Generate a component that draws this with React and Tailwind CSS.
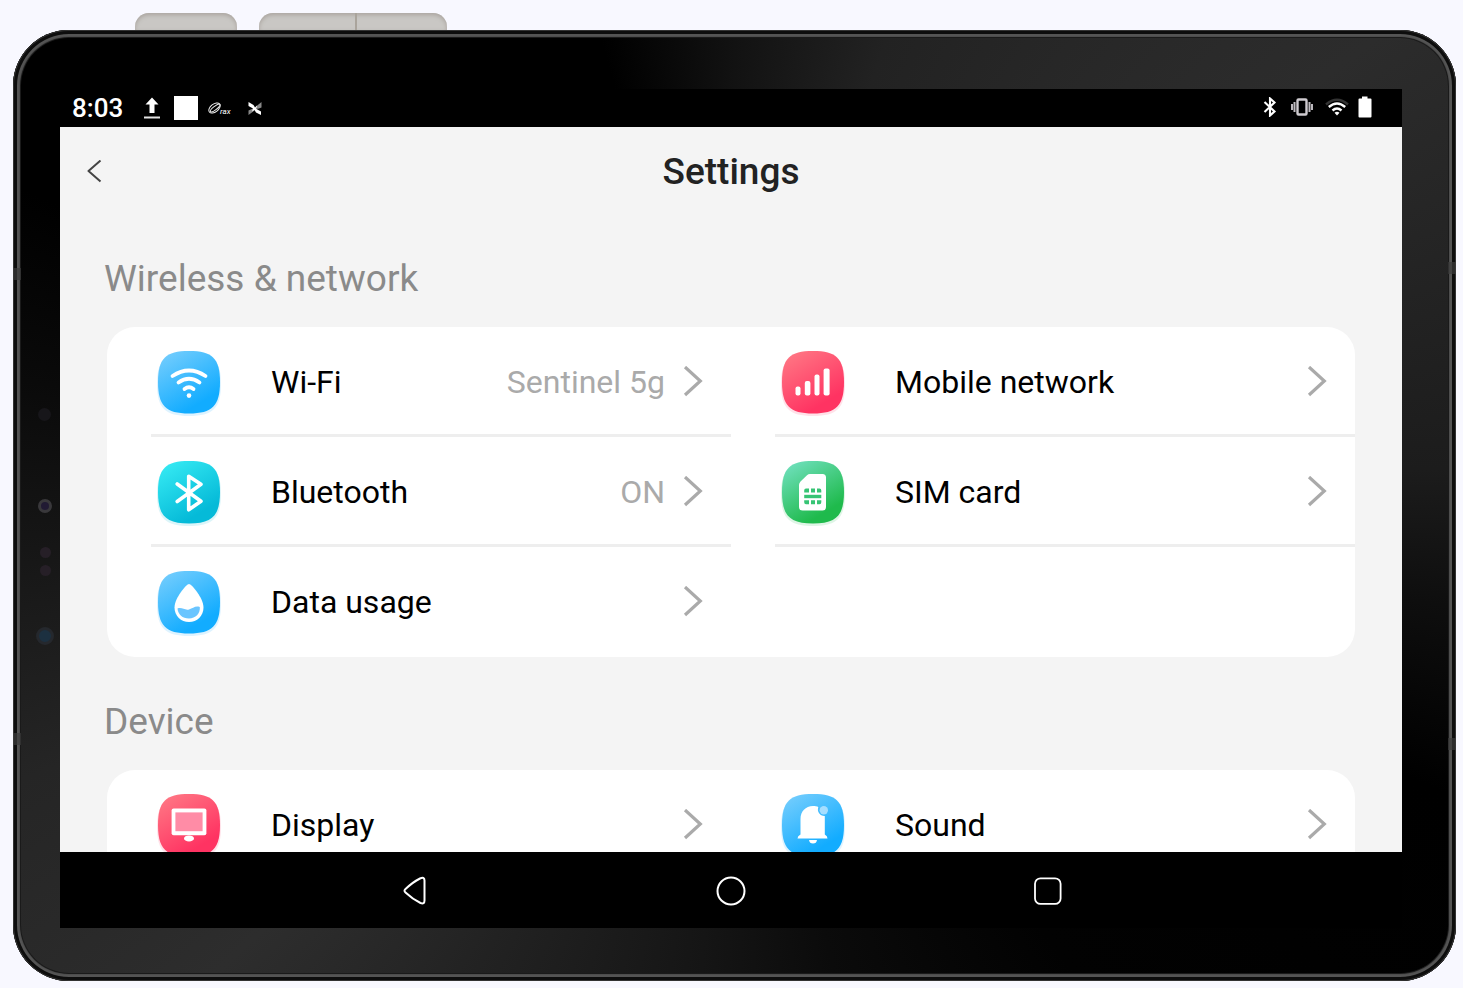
import React from "react";

const tones = {
  blue: ["#74cdfd", "#12acff"],
  cyan: ["#36eaf3", "#05bad8"],
  green: ["#70e0bd", "#1fba4c"],
  red: ["#ff7784", "#ff3362"],
};

function Tile({ id, tone, children }) {
  const [from, to] = tones[tone];
  return (
    <svg viewBox="0 0 64 64" className="size-16 shrink-0 overflow-visible" aria-hidden="true">
      <defs>
        <linearGradient id={id} x1="0.15" y1="0" x2="0.65" y2="0.85">
          <stop offset="0" stopColor={from} />
          <stop offset="1" stopColor={to} />
        </linearGradient>
      </defs>
      <path
        d="M32 3C56 3 64 10 64 34S56 66 32 66 0 58 0 34 8 3 32 3Z"
        fill={to}
        opacity="0.14"
      />
      <path d="M32 1C55.500 1 63 8.500 63 32S55.500 63.500 32 63.500 1 55.500 1 32 8.500 1 32 1Z" fill={`url(#${id})`} />
      {children}
    </svg>
  );
}

const WifiTile = () => (
  <Tile id="t-wifi" tone="blue">
    <g fill="none" stroke="#fff" strokeLinecap="round" strokeWidth="3.8">
      <path d="M15.500 26Q32 15 48.500 26" />
      <path d="M21.500 32.500Q32 25 42.500 32.500" />
      <path d="M27.500 39Q32 35.500 36.500 39" />
    </g>
    <circle cx="32" cy="45.600" r="2.300" fill="#fff" />
  </Tile>
);

const BluetoothTile = () => (
  <Tile id="t-bt" tone="cyan">
    <path
      d="M20.200 24L44 41.300L31.700 49.800V16.200L44 24.300L20.200 41.500"
      fill="none"
      stroke="#fff"
      strokeWidth="3.600"
      strokeLinecap="round"
      strokeLinejoin="round"
    />
  </Tile>
);

const DropTile = () => (
  <Tile id="t-drop" tone="blue">
    <path
      d="M32 14C34.500 14 46.500 28 46.500 37.500C46.500 46 40 52 32 52S17.500 46 17.500 37.500C17.500 28 29.500 14 32 14Z"
      fill="#fff"
    />
    <path
      d="M20.500 38.500C25 37 27.500 40.500 32 39.500C36 38.500 38 35.500 42.800 37C43.500 43.500 38.500 48.500 32 48.500S21 44.500 20.500 38.500Z"
      fill="#6ac5ff"
    />
  </Tile>
);

const SignalTile = () => (
  <Tile id="t-signal" tone="red">
    <g fill="#fff">
      <rect x="14.500" y="36.500" width="5" height="9" rx="2" />
      <rect x="23.800" y="31" width="5.600" height="14.500" rx="2" />
      <rect x="33.500" y="24.500" width="5" height="21" rx="2" />
      <rect x="42.600" y="18.500" width="6" height="27" rx="2" />
    </g>
  </Tile>
);

const SimTile = () => (
  <Tile id="t-sim" tone="green">
    <path
      d="M29 14H41.500Q45 14 45 17.500V47Q45 50.500 41.500 50.500H21.500Q18 50.500 18 47V25Q18 23 19.500 21.500L26 15.200Q27.200 14 29 14Z"
      fill="#fff"
    />
    <g fill="#36c474">
      <path d="M25 28.500H28V32.500H23.200V30.500Q23.200 28.500 25 28.500ZM30 28.500H34V32.500H30ZM36 28.500H38.500Q40.300 28.500 40.300 30.500V32.500H36Z" />
      <path d="M23.200 34.800H40.300V38.200H23.200Z" />
      <path d="M23.200 40.200H28V44.300H25Q23.200 44.300 23.200 42.300ZM30 40.200H34V44.300H30ZM36 40.200H40.300V42.300Q40.300 44.300 38.500 44.300H36Z" />
    </g>
  </Tile>
);

const DisplayTile = () => (
  <Tile id="t-display" tone="red">
    <rect x="14.600" y="15.400" width="34.800" height="26.800" rx="2" fill="#fff" />
    <rect x="18.400" y="19.400" width="27.200" height="18.800" fill="#ff8ca6" />
    <ellipse cx="32" cy="45.400" rx="5" ry="3" fill="#fff" />
  </Tile>
);

const SoundTile = () => (
  <Tile id="t-sound" tone="blue">
    <path
      d="M16.500 45.500Q16.500 43 19.500 41.500V26C19.500 18.500 24.500 13 32 13C34 13 36 13.400 37.300 14C35.800 18.500 38.500 22.800 43.800 23V41.500Q46.500 43 46.500 45.500Z"
      fill="#fff"
    />
    <path d="M28 47H36Q35.500 50.500 32 50.500T28 47Z" fill="#fff" />
    <circle cx="42.800" cy="17.300" r="4.200" fill="#a5deff" />
  </Tile>
);

function Chevron() {
  return (
    <svg viewBox="0 0 20 32" className="h-8 w-5 shrink-0" fill="none" aria-hidden="true">
      <path d="M2 1L17.300 15L2 29" stroke="#aaa" strokeWidth="3.200" />
    </svg>
  );
}

function Row({ item }) {
  return (
    <li className={item.divider ? "shadow-[inset_0_-3px_0_#eeeeee]" : ""}>
      <a href="#" className="flex h-[110px] items-center pr-7 pl-[6px]">
        <item.icon />
        <span className="ml-[50px] text-black">{item.label}</span>
        <span className="mr-[18px] ml-auto text-[#aaaaaa]">{item.value}</span>
        <Chevron />
      </a>
    </li>
  );
}

const sections = [
  {
    title: "Wireless & network",
    items: [
      { label: "Wi-Fi", value: "Sentinel 5g", icon: WifiTile, divider: true },
      { label: "Mobile network", icon: SignalTile, divider: true },
      { label: "Bluetooth", value: "ON", icon: BluetoothTile, divider: true },
      { label: "SIM card", icon: SimTile, divider: true },
      { label: "Data usage", icon: DropTile },
    ],
  },
  {
    title: "Device",
    items: [
      { label: "Display", icon: DisplayTile, divider: true },
      { label: "Sound", icon: SoundTile, divider: true },
    ],
  },
];

function Section({ section }) {
  return (
    <section>
      <h2 className="flex h-[113px] items-center px-11 pt-4 text-[37px] leading-10 text-[#8a8a8a]">
        {section.title}
      </h2>
      <ul className="mx-[47px] grid grid-cols-2 gap-x-11 rounded-[28px] bg-white pl-11 text-[32px] leading-10">
        {section.items.map((item) => (
          <Row key={item.label} item={item} />
        ))}
      </ul>
    </section>
  );
}

function StatusBar() {
  return (
    <div className="flex h-[38px] shrink-0 items-center bg-black pr-[30px] pl-3 text-white">
      <span className="w-[71px] text-[26px] leading-8 font-medium">8:03</span>
      <svg viewBox="0 0 18 24" className="h-6 w-[18px]" aria-hidden="true">
        <path d="M9 1.500L15.500 8.500H11.500V17H6.500V8.500H2.500Z" fill="#fff" />
        <path d="M1 20.500H17V22.500H1Z" fill="#e4e4e4" />
      </svg>
      <span className="ml-[13px] size-6 bg-white" />
      <svg viewBox="0 0 26 14" className="ml-[10px] h-[14px] w-[26px]" aria-hidden="true">
        <g fill="none" stroke="#eee" strokeWidth="1">
          <ellipse cx="6.500" cy="7" rx="6.500" ry="3.900" transform="rotate(-38 6.500 7)" />
          <ellipse cx="7.200" cy="7" rx="6" ry="1.800" transform="rotate(-38 7.200 7)" />
        </g>
        <text x="12" y="12.500" fontSize="8" fontStyle="italic" fill="#fff">
          rax
        </text>
      </svg>
      <svg viewBox="0 0 14 14" className="ml-[14px] h-[14px] w-[14px]" aria-hidden="true">
        <path d="M13.500 1V6.500L9.500 8L8 5.500ZM0.500 14V9.500L5 7.500L6.500 9.500Z" fill="#888" />
        <path d="M0.500 1L5.500 4L7 6.500L9 4.500L8.500 8L13 10.500V14L8 11.500L6.500 9L4 10.500L5 7.500L0.500 5Z" fill="#fff" />
      </svg>
      <div className="ml-auto flex items-center pb-[2px]">
        <svg viewBox="0 0 14 20" className="h-5 w-[14px]" fill="none" aria-hidden="true">
          <path d="M1.500 5L11.500 14.500L7 18.500V1.500L11.500 5.500L1.500 15" stroke="#fff" strokeWidth="2.100" />
        </svg>
        <svg viewBox="0 0 22 18" className="ml-[14px] h-[18px] w-[22px]" aria-hidden="true">
          <rect x="6.500" y="1.500" width="9" height="15" rx="1" fill="none" stroke="#cfcbd0" strokeWidth="2.400" />
          <path d="M1 6V12M3.500 4V14M18.500 4V14M21 6V12" stroke="#bdb9be" strokeWidth="2" />
        </svg>
        <svg viewBox="0 0 24 18" className="ml-3 h-[18px] w-6" fill="none" aria-hidden="true">
          <path d="M1 6.500Q12 -3 23 6.500" stroke="#333" strokeWidth="2.400" />
          <path d="M3.800 9Q12 2 20.200 9M7.500 12.500Q12 8.500 16.500 12.500" stroke="#fff" strokeWidth="2.400" />
          <path d="M12 17.500L9.500 14.700Q12 13 14.500 14.700Z" fill="#fff" />
        </svg>
        <svg viewBox="0 0 14 22" className="ml-[9px] h-[22px] w-[14px]" aria-hidden="true">
          <path d="M4 0.500H9.500V2.500H12.500Q13.500 2.500 13.500 3.500V20.500Q13.500 21.500 12.500 21.500H1.500Q0.500 21.500 0.500 20.500V3.500Q0.500 2.500 1.500 2.500H4Z" fill="#fff" />
        </svg>
      </div>
    </div>
  );
}

function NavBar() {
  return (
    <nav className="grid h-[76px] shrink-0 grid-cols-3 place-items-center bg-black px-[197px]">
      <button aria-label="Back" className="size-12">
        <svg viewBox="0 0 48 48" fill="none" stroke="#fff" strokeWidth="2" strokeLinejoin="round">
          <path d="M14.500 26.500Q12.500 24.800 14.500 23Q22 16 29 12.500Q33.500 10.500 33.500 14.500V34.500Q33.500 38.500 29.500 37Q22 33.500 14.500 26.500Z" />
        </svg>
      </button>
      <button aria-label="Home" className="size-12">
        <svg viewBox="0 0 48 48" fill="none" stroke="#fff" strokeWidth="2">
          <circle cx="24" cy="25" r="13.500" />
        </svg>
      </button>
      <button aria-label="Recent apps" className="size-12">
        <svg viewBox="0 0 48 48" fill="none" stroke="#fff" strokeWidth="1.800">
          <rect x="12" y="12.300" width="25.600" height="25.600" rx="5.500" />
        </svg>
      </button>
    </nav>
  );
}

function Sensors() {
  return (
    <div aria-hidden="true">
      <i className="absolute top-[378px] left-[25px] size-[13px] rounded-full bg-[#17161a]" />
      <i className="absolute top-[469px] left-[25px] size-[14px] rounded-full border-3 border-[#39383b] bg-[#211a33]" />
      <i className="absolute top-[517px] left-[27px] size-[11px] rounded-full bg-[#261f27]" />
      <i className="absolute top-[535px] left-[27px] size-[11px] rounded-full bg-[#261f27]" />
      <i className="absolute top-[597px] left-[23px] size-[18px] rounded-full border-3 border-[#25282d] bg-[#1c3040]" />
      <i className="absolute top-[238px] left-0 h-3 w-2 bg-[#3c3c3c]/70" />
      <i className="absolute top-[703px] left-0 h-3 w-2 bg-[#3c3c3c]/70" />
      <i className="absolute top-[232px] right-0 h-3 w-2 bg-[#3c3c3c]/70" />
      <i className="absolute top-[708px] right-0 h-3 w-2 bg-[#3c3c3c]/70" />
    </div>
  );
}

export default function App() {
  return (
    <div className="flex h-screen flex-col bg-[#f8f8ff] pt-[13px] pr-[7px] pb-[7px] pl-[13px] font-[Roboto,sans-serif]">
      <div className="flex h-[17px] shrink-0 gap-[22px] pl-[122px]" aria-hidden="true">
        <div className="w-[102px] rounded-t-[14px] bg-[#c9c7c4] shadow-[inset_0_2px_4px_#aaa49f]" />
        <div className="flex w-[188px] rounded-t-[14px] bg-[#c9c7c4] shadow-[inset_0_2px_4px_#aaa49f]">
          <div className="w-[98px] border-r-2 border-[#aaa49c]" />
        </div>
      </div>
      <div className="relative flex min-h-0 flex-1 rounded-[56px] bg-[conic-gradient(#121212_0deg,#222222_18deg,#2c2c2c_54deg,#1c1c1c_87deg,#0e0e0e_98deg,#000000_112deg,#020202_144deg,#0b0b0b_168deg,#151515_184deg,#222222_209deg,#2d2d2d_228deg,#252525_249deg,#1a1a1a_262deg,#0a0a0a_280deg,#000000_294deg,#000000_344deg,#121212_360deg)] pt-[59px] pr-[54px] pb-[53px] pl-[47px] shadow-[inset_0_0_0_1px_#333333,inset_0_0_0_4px_#0d0d0d,inset_0_0_1px_7px_#545454,inset_0_0_0_8px_#141414]">
        <Sensors />
        <div className="flex min-w-0 flex-1 flex-col bg-[#f4f4f4]">
          <StatusBar />
          <main className="min-h-0 flex-1 overflow-hidden">
            <header className="grid h-[87px] grid-cols-[1fr_auto_1fr] items-center px-[26px] pt-[3px]">
              <button aria-label="Back" className="h-6 w-4">
                <svg viewBox="0 0 16 24" fill="none">
                  <path d="M14.500 0.500L2.500 11L14.500 21.500" stroke="#444" strokeWidth="2" strokeLinejoin="round" />
                </svg>
              </button>
              <h1 className="text-[37px] leading-10 font-medium text-[#222222]">Settings</h1>
            </header>
            {sections.map((section) => (
              <Section key={section.title} section={section} />
            ))}
          </main>
          <NavBar />
        </div>
      </div>
    </div>
  );
}
